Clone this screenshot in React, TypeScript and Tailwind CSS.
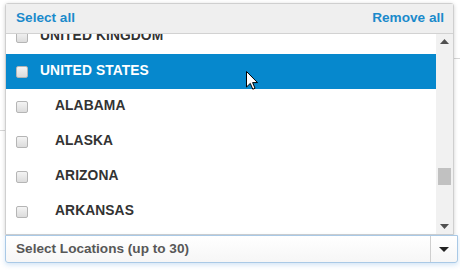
import React from 'react';

const items = [
  { label: 'UNITED KINGDOM', level: 0 },
  { label: 'UNITED STATES', level: 0, active: true },
  { label: 'ALABAMA', level: 1 },
  { label: 'ALASKA', level: 1 },
  { label: 'ARIZONA', level: 1 },
  { label: 'ARKANSAS', level: 1 },
];

function Box() {
  return <span className="w-[12px] h-[12px] shrink-0 rounded-[2px] border border-[#b5b5b5] bg-gradient-to-b from-[#f4f4f4] to-[#dcdcdc]" />;
}

export default function App() {
  return (
    <div className="w-[460px] h-[272px] bg-white relative overflow-hidden" style={{ fontFamily: '"Liberation Sans", Arial, sans-serif' }}>
      {/* page behind the dropdown */}
      <div className="absolute left-0 top-[130px] w-[6px] h-px bg-[#d6d6d6]" />
      <div className="absolute right-0 top-[58px] w-[8px] h-px bg-[#d6d6d6]" />

      <div className="absolute left-[5px] top-[3px] w-[449px] flex flex-col">
        {/* panel */}
        <div className="border border-[#cfcfcf] rounded-t-[3px] bg-white shadow-[0_1px_4px_rgba(0,0,0,0.18)] flex flex-col">
          <div className="h-[30px] bg-[#efefef] border-b border-[#d2d2d2] flex items-center justify-between pl-[10px] pr-[9px] text-[13.6px] font-bold text-[#1b8acb]">
            <span>Select all</span>
            <span>Remove all</span>
          </div>
          <div className="h-[200px] flex">
            <div className="flex-1 overflow-hidden">
              <div className="-mt-[15px]">
                {items.map((it) => (
                  <div
                    key={it.label}
                    className={`h-[35px] flex items-center pl-[10px] text-[13.8px] font-bold tracking-[0.1px] ${it.active ? 'bg-[#0688cd] text-white' : 'text-[#333333]'}`}
                  >
                    <Box />
                    <span className={it.level ? 'ml-[27px]' : 'ml-[12px]'}>{it.label}</span>
                  </div>
                ))}
              </div>
            </div>
            <div className="w-[17px] bg-[#f1f1f1] flex flex-col items-center justify-between py-[5px] relative">
              <svg width="9" height="5" viewBox="0 0 9 5"><path d="M0 5L4.5 0L9 5Z" fill="#505050" /></svg>
              <div className="absolute left-[2px] top-[134px] w-[13px] h-[17px] bg-[#c1c1c1]" />
              <svg width="9" height="5" viewBox="0 0 9 5"><path d="M0 0L4.5 5L9 0Z" fill="#505050" /></svg>
            </div>
          </div>
        </div>
        {/* select box */}
        <div className="w-[453px] h-[28px] border border-[#a9c9e6] rounded-b-[3px] bg-gradient-to-b from-white to-[#f6f6f6] shadow-[0_2px_5px_rgba(80,150,220,0.25)] flex items-center">
          <span className="flex-1 pl-[10px] text-[13.6px] font-bold text-[#575757]">Select Locations (up to 30)</span>
          <div className="w-[27px] h-full border-l border-[#cfcfcf] flex items-center justify-center">
            <svg width="10" height="5" viewBox="0 0 10 5"><path d="M0 0L5 5L10 0Z" fill="#222" /></svg>
          </div>
        </div>
      </div>

      {/* mouse cursor */}
      <svg className="absolute left-[246px] top-[71px]" width="12" height="19" viewBox="0 0 12 19">
        <path d="M0.5 0.5V16L4.3 12.4L6.8 18.2L9 17.2L6.6 11.6H11.5Z" fill="white" stroke="black" strokeWidth="1" strokeLinejoin="round" />
      </svg>
    </div>
  );
}
